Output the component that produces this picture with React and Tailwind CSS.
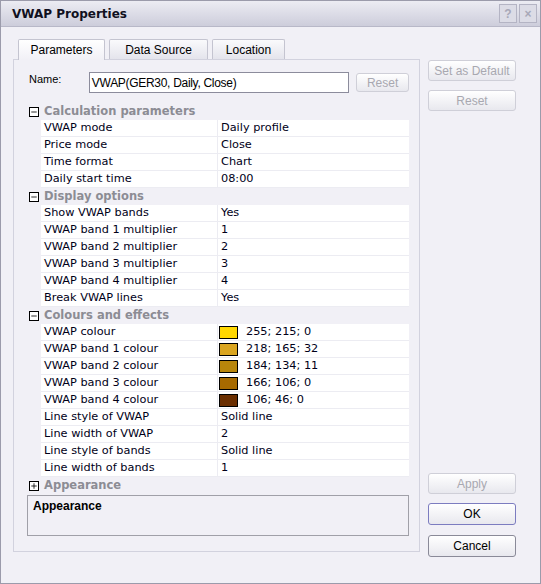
import { Minus, Plus } from 'lucide-react'

const ui = { fontFamily: '"Liberation Sans", Arial, sans-serif' }
const grid = { fontFamily: '"DejaVu Sans", Verdana, sans-serif' }

const sections = [
  {
    title: 'Calculation parameters',
    rows: [
      ['VWAP mode', 'Daily profile'],
      ['Price mode', 'Close'],
      ['Time format', 'Chart'],
      ['Daily start time', '08:00'],
    ],
  },
  {
    title: 'Display options',
    rows: [
      ['Show VWAP bands', 'Yes'],
      ['VWAP band 1 multiplier', '1'],
      ['VWAP band 2 multiplier', '2'],
      ['VWAP band 3 multiplier', '3'],
      ['VWAP band 4 multiplier', '4'],
      ['Break VWAP lines', 'Yes'],
    ],
  },
  {
    title: 'Colours and effects',
    rows: [
      ['VWAP colour', '255; 215; 0', '#ffd700'],
      ['VWAP band 1 colour', '218; 165; 32', '#daa520'],
      ['VWAP band 2 colour', '184; 134; 11', '#b8860b'],
      ['VWAP band 3 colour', '166; 106; 0', '#a66a00'],
      ['VWAP band 4 colour', '106; 46; 0', '#6a2e00'],
      ['Line style of VWAP', 'Solid line'],
      ['Line width of VWAP', '2'],
      ['Line style of bands', 'Solid line'],
      ['Line width of bands', '1'],
    ],
  },
]

// ── Bouton style XP ──────────────────────────────────────────
function XpButton({ children, disabled, primary, className = '' }) {
  const border = disabled ? 'border-[#cfcfd8] text-[#a8a8b0]' : primary ? 'border-[#7c7cc0] text-black' : 'border-[#8a8a98] text-black'
  return (
    <button
      type="button"
      className={`flex items-center justify-center rounded-[3px] border bg-gradient-to-b from-white to-[#e8e8ee] text-[12px] ${border} ${className}`}
      style={ui}
    >
      {children}
    </button>
  )
}

function SignBox({ open }) {
  return (
    <span className="w-[10px] h-[10px] border border-black flex items-center justify-center bg-white flex-shrink-0">
      {open ? <Minus size={8} strokeWidth={2.5} /> : <Plus size={8} strokeWidth={2.5} />}
    </span>
  )
}

function SectionHeader({ title, open = true }) {
  return (
    <div className="h-[17px] flex items-center">
      <span className="w-[14px] pl-[2px] flex items-center"><SignBox open={open} /></span>
      <span className="pl-[3px] text-[11.5px] font-bold text-[#8c8c94]" style={grid}>{title}</span>
    </div>
  )
}

function Row({ label, value, swatch }) {
  return (
    <div className="ml-[14px] h-[17px] flex border-b border-[#ececf2] bg-white text-[11.3px] text-[#000018]" style={grid}>
      <div className="w-[177px] pl-[3px] border-r border-[#ececf2] flex items-center">{label}</div>
      <div className="flex-1 flex items-center pl-[3px]">
        {swatch && <span className="w-[19px] h-[13px] border border-black mr-[8px] -ml-[2px]" style={{ background: swatch }} />}
        {value}
      </div>
    </div>
  )
}

export default function App() {
  return (
    <div className="w-[541px] h-[584px] bg-[#f1f0f6] border border-[#9b9bab] flex flex-col select-none">
      {/* Barre de titre */}
      <div className="h-[26px] flex items-center justify-between pl-[11px] pr-[3px] bg-gradient-to-b from-[#ececf3] to-[#cdcddb] border-b border-[#b8b8c8]">
        <span className="text-[12px] font-bold text-[#101020]" style={grid}>VWAP Properties</span>
        <div className="flex gap-[2px]">
          <span className="w-[18px] h-[19px] border border-[#b4b4c4] bg-[#dcdce6] flex items-center justify-center text-[12px] font-bold text-[#a8a8b8]" style={ui}>?</span>
          <span className="w-[18px] h-[19px] border border-[#b4b4c4] bg-[#dcdce6] flex items-center justify-center text-[12px] font-bold text-[#a8a8b8]" style={ui}>×</span>
        </div>
      </div>

      <div className="flex flex-1 pl-[12px] pt-[11px]">
        {/* Onglets + panneau */}
        <div className="w-[407px] flex flex-col">
          <div className="flex h-[21px] pl-[5px] gap-[4px] items-end text-[12px] text-black" style={ui}>
            <div className="h-[21px] w-[87px] flex items-center justify-center border border-b-0 border-[#c4c4d0] rounded-t-[2px] bg-gradient-to-b from-white to-[#f1f0f6] relative top-[1px]">Parameters</div>
            <div className="h-[20px] w-[99px] flex items-center justify-center border border-b-0 border-[#c4c4d0] rounded-t-[2px] bg-gradient-to-b from-[#fafafc] to-[#e4e4ec]">Data Source</div>
            <div className="h-[20px] w-[73px] flex items-center justify-center border border-b-0 border-[#c4c4d0] rounded-t-[2px] bg-gradient-to-b from-[#fafafc] to-[#e4e4ec]">Location</div>
          </div>
          <div className="h-[493px] border border-[#d2d2de] bg-[#f1f0f6] pl-[13px] pr-[10px] pt-[12px]">
            <div className="flex h-[21px]">
              <span className="w-[62px] pl-[2px] pt-[1px] text-[11px] text-black leading-[12px]" style={ui}>Name:</span>
              <div className="w-[261px] h-[21px] border border-[#8c8c9c] bg-white flex items-center pl-[2px] text-[12px] text-black tracking-[-0.3px]" style={ui}>
                VWAP(GER30, Daily, Close)
              </div>
              <XpButton disabled className="ml-[7px] w-[53px] h-[19px] mt-[1px]">Reset</XpButton>
            </div>

            <div className="mt-[10px]">
              {sections.map(s => (
                <div key={s.title}>
                  <SectionHeader title={s.title} />
                  {s.rows.map(([l, v, c]) => <Row key={l} label={l} value={v} swatch={c} />)}
                </div>
              ))}
              <SectionHeader title="Appearance" open={false} />
            </div>

            <div className="mt-[1px] h-[41px] border border-[#a0a0a8] pl-[5px] pt-[3px] text-[12px] leading-[14px]">
              <span className="font-bold text-black" style={ui}>Appearance</span>
            </div>
          </div>
        </div>

        {/* Boutons de droite */}
        <div className="ml-[8px] w-[88px] flex flex-col pt-[22px] pb-[26px]">
          <XpButton disabled className="h-[21px]">Set as Default</XpButton>
          <XpButton disabled className="h-[21px] mt-[9px]">Reset</XpButton>
          <div className="flex-1" />
          <XpButton disabled className="h-[21px]">Apply</XpButton>
          <XpButton primary className="h-[22px] mt-[9px]">OK</XpButton>
          <XpButton className="h-[22px] mt-[10px]">Cancel</XpButton>
        </div>
      </div>
    </div>
  )
}
